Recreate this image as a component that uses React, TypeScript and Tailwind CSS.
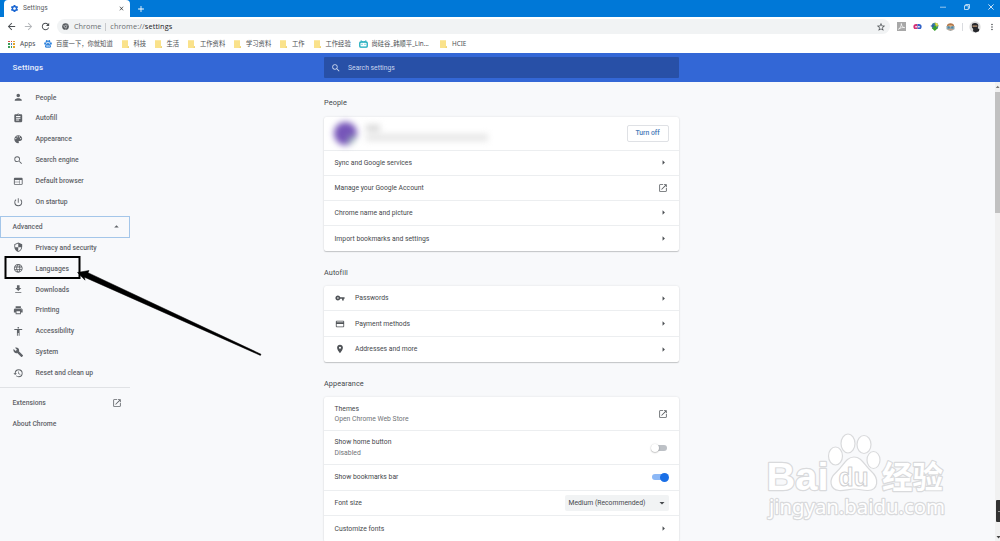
import React from "react";
import type { IconType } from "react-icons";
import {
  MdPerson, MdAssignment, MdSearch, MdWeb, MdPowerSettingsNew, MdSecurity,
  MdLanguage, MdFileDownload, MdPrint, MdAccessibility, MdBuild, MdRestore, MdVpnKey,
  MdCreditCard, MdLocationOn, MdSettings, MdArrowBack, MdArrowForward, MdRefresh,
  MdStarBorder, MdMoreVert, MdOpenInNew, MdArrowRight, MdArrowDropUp, MdArrowDropDown,
  MdClose, MdAdd,
} from "react-icons/md";

function Palette({ className }: { className?: string }) {
  return (
    <svg viewBox="0 0 24 24" className={className} fill="currentColor">
      <path d="M12 3c-4.970 0-9 4.030-9 9s4.030 9 9 9c.83 0 1.500-.67 1.500-1.500 0-.39-.15-.74-.39-1.010-.23-.26-.38-.61-.38-.99 0-.83.67-1.500 1.500-1.500H16c2.760 0 5-2.240 5-5 0-4.420-4.030-8-9-8zm-5.500 9c-.83 0-1.500-.67-1.500-1.500S5.670 9 6.500 9 8 9.670 8 10.500 7.330 12 6.500 12zm3-4C8.670 8 8 7.330 8 6.500S8.670 5 9.500 5s1.500.67 1.500 1.500S10.330 8 9.500 8zm5 0c-.83 0-1.500-.67-1.500-1.500S13.670 5 14.500 5s1.500.67 1.500 1.500S15.330 8 14.500 8zm3 4c-.83 0-1.500-.67-1.500-1.500S16.670 9 17.500 9s1.500.67 1.500 1.500-.67 1.500-1.500 1.500z" />
    </svg>
  );
}

type IconComponent = IconType | typeof Palette;

const basicItems: [IconComponent, string][] = [
  [MdPerson, "People"],
  [MdAssignment, "Autofill"],
  [Palette, "Appearance"],
  [MdSearch, "Search engine"],
  [MdWeb, "Default browser"],
  [MdPowerSettingsNew, "On startup"],
];

const advancedItems: [IconComponent, string][] = [
  [MdSecurity, "Privacy and security"],
  [MdLanguage, "Languages"],
  [MdFileDownload, "Downloads"],
  [MdPrint, "Printing"],
  [MdAccessibility, "Accessibility"],
  [MdBuild, "System"],
  [MdRestore, "Reset and clean up"],
];

function Folder({ label, className }: { label: string; className: string }) {
  return (
    <div className={`flex shrink-0 items-center ${className}`}>
      <svg viewBox="0 0 7 8" className="mr-[5px] h-[8px] w-[7px] shrink-0">
        <path d="M0 .3h6v5.900h1V8H0z" fill="#fae28b" />
        <path d="M6 6.200h1V8H5.400z" fill="#efd377" />
      </svg>
      <span className="whitespace-nowrap">{label}</span>
    </div>
  );
}

function TabStrip() {
  return (
    <div className="flex h-[17px] shrink-0 bg-[#0078d7]">
      <div className="ml-[4px] flex h-full w-[126px] items-center rounded-t-[4px] bg-white pl-[6px] pr-[5px]">
        <MdSettings className="size-[9px] text-[#1a66d2]" />
        <span className="ml-[4px] pt-px text-[6.6px] tracking-[0.1px] text-[#55595d]">Settings</span>
        <MdClose className="ml-auto size-[7px] text-[#3c4043]" />
      </div>
      <MdAdd className="ml-[6px] mt-[3.5px] size-[10px] text-white" />
      <div className="ml-auto flex h-[14px] items-center gap-[18px] pr-[6px] text-white">
        <svg viewBox="0 0 6 6" className="size-[6px]" stroke="currentColor" strokeWidth=".6"><path d="M0 3.200h6" /></svg>
        <svg viewBox="0 0 6 6" className="size-[6px]" stroke="currentColor" strokeWidth=".7" fill="none"><path d="M.5 1.700h3.800v3.800H.5zM1.700 1.500V.5h3.800v3.800h-1" /></svg>
        <svg viewBox="0 0 6 6" className="size-[6px]" stroke="currentColor" strokeWidth=".8"><path d="m.4.4 5.200 5.200m0-5.200L.4 5.600" /></svg>
      </div>
    </div>
  );
}

function Toolbar() {
  return (
    <div className="flex h-[18px] shrink-0 items-center bg-white pt-[1px] text-[#4b4f53]">
      <MdArrowBack className="ml-[6px] size-[11px]" />
      <MdArrowForward className="ml-[6px] size-[11px] text-[#b3b6b9]" />
      <MdRefresh className="ml-[5.5px] size-[11px]" />
      <div className="ml-[6px] flex h-[15px] w-[833px] items-center rounded-full bg-[#f1f3f4] pl-[5.5px] pr-[4px]">
        <svg viewBox="0 0 24 24" className="size-[7px]">
          <circle cx="12" cy="12" r="11.500" fill="#55595d" />
          <circle cx="12" cy="12" r="4" fill="#55595d" stroke="#e8eaed" strokeWidth="2" />
          <path d="M12 7h11M8 15 3 5.500M16 14l-5 9.500" stroke="#c8cacd" strokeWidth="1.500" />
        </svg>
        <span className="ml-[5px] font-['Open_Sans'] text-[7.3px] text-[#686c70]">Chrome</span>
        <span className="ml-[4px] h-[8px] w-px bg-[#c7c9cc]" />
        <span className="ml-[4px] font-['Open_Sans'] text-[7.3px] tracking-[0.12px] text-[#686c70]">
          chrome://<span className="text-[#202124]">settings</span>
        </span>
        <MdStarBorder className="ml-auto size-[10px]" />
      </div>
      <svg viewBox="0 0 9 9" className="ml-[7px] size-[9px]">
        <path fill="#a8a8a8" d="M0 0h9v9H0z" />
        <path d="M1.500 7.200C3 6.500 4.500 4 4.300 1.500c.2 2.600 1.500 4 3.400 4.100C5.500 5.300 3.500 5.800 1.500 7.200z" stroke="#fff" strokeWidth=".7" fill="none" />
      </svg>
      <svg viewBox="0 0 9 6" className="ml-[7.500px] h-[5.500px] w-[9px]">
        <path d="M4.500 0H3a3 3 0 0 0 0 6h1.500z" fill="#d72f75" />
        <path d="M4.500 0H6a3 3 0 0 1 0 6H4.500z" fill="#3264c8" />
        <path d="M2 3h2.200M5 3h2" stroke="#f0d8e8" strokeWidth="1.500" />
      </svg>
      <svg viewBox="0 0 9 9" className="ml-[8px] size-[9px]">
        <circle cx="5" cy="4" r="3.300" fill="#3f7f9c" />
        <path d="M4.500 .7a3.500 3.500 0 0 1 4 3.300L6 5z" fill="#a7c23c" />
        <path d="M.2 4 3.800 2.400l.4 3.100z" fill="#2e5fa8" />
        <path d="M3.500 4h2.600v2H8L4.800 8.900 1.700 6h1.800z" fill="#35a029" />
        <path d="M5.500 1.500 7 1l1 2-1.500.6z" fill="#f0dc55" />
      </svg>
      <svg viewBox="0 0 9 8" className="ml-[7px] h-[8px] w-[9px]">
        <path d="M.8 3.500C.8 1.500 2.500.3 4.500.3s3.700 1.200 3.700 3.200z" fill="#b27749" />
        <path d="M.5 3h8v3.300L4.500 7.900.5 6.300z" fill="#8da5ac" />
        <path d="M2.500 2.300h4v1.300h-4z" fill="#e8ba8b" />
        <path d="M2 6.200h5v1H2z" fill="#d0a182" />
        <circle cx="2.800" cy="4.400" r="1.100" fill="#4d87a9" /><circle cx="6.200" cy="4.400" r="1.100" fill="#4d87a9" />
      </svg>
      <span className="ml-[7px] h-[8px] w-px bg-[#dadce0]" />
      <svg viewBox="0 0 12 12" className="ml-[6px] size-[12px]">
        <circle cx="6" cy="6" r="5.700" fill="#dcdcdc" />
        <path d="M2.800 4.500C2.800 2.800 4 2 6 2s3.300.8 3.300 2.700l-.5 2.500 1.500 1-.4 2-3.200 1.200-2.700-1.100L4.200 8 3 6.500z" fill="#25262a" />
        <path d="M3.500 4.500h4.800v1.200H3.500z" fill="#c69c77" />
      </svg>
      <MdMoreVert className="ml-[6px] size-[10px]" />
    </div>
  );
}

function Bookmarks() {
  const colors = ["#d84a3d", "#d84a3d", "#e3a52c", "#3a9d58", "#4a7fd8", "#e3a52c", "#3a9d58", "#3a9d58", "#e3a52c"];
  return (
    <div className="flex h-[18px] shrink-0 items-center overflow-hidden bg-white font-['Noto_Sans','Noto_Sans_CJK_SC',sans-serif] text-[6.3px] text-[#4a4e52]">
      <div className="ml-[8px] grid size-[7px] shrink-0 grid-cols-3 gap-px">
        {colors.map((c, i) => <span key={i} style={{ background: c }} />)}
      </div>
      <span className="ml-[5px] w-[16px] text-[6.5px]">Apps</span>
      <svg viewBox="0 0 24 24" className="ml-[8px] size-[8px] shrink-0" fill="#2e82dc">
        <ellipse cx="3.500" cy="10.500" rx="3" ry="3.800" /><ellipse cx="8.500" cy="4" rx="3" ry="4" />
        <ellipse cx="15.500" cy="4" rx="3" ry="4" /><ellipse cx="20.500" cy="10.500" rx="3" ry="3.800" />
        <path d="M12 9c4 0 5 4 8 7 3 4 0 8-4 7.500-3-.5-5-.5-8 0C4 24 1 20 4 16c3-3 4-7 8-7z" />
        <path d="M8 16h3v4H8zm6-1v5h3v-4" fill="none" stroke="#fff" strokeWidth="1.400" />
      </svg>
      <span className="ml-[4px] w-[58px] shrink-0 whitespace-nowrap">百度一下，你就知道</span>
      <Folder label="科技" className="ml-[7.5px] w-[33px]" />
      <Folder label="生活" className="w-[33.5px]" />
      <Folder label="工作资料" className="w-[46px]" />
      <Folder label="学习资料" className="w-[46px]" />
      <Folder label="工作" className="w-[33.5px]" />
      <Folder label="工作经验" className="w-[45px]" />
      <svg viewBox="0 0 9 8" className="h-[8px] w-[9px] shrink-0" fill="none" stroke="#14a9bb" strokeWidth="1.300">
        <rect x=".8" y="2" width="7.400" height="5.200" rx="1" />
        <path d="m2 .3 1.300 1.500M7 .3 5.700 1.800M3 3.800v1M6 3.800v1" strokeWidth="1" />
      </svg>
      <span className="ml-[4px] w-[58px] shrink-0 whitespace-nowrap">尚硅谷_韩顺平_Lin...</span>
      <Folder label="HCIE" className="ml-[10.5px]" />
    </div>
  );
}

function SideItem({ icon: Icon, label }: { icon: IconComponent; label: string }) {
  return (
    <div className="flex h-[20.9px] items-center pl-[12.5px]">
      <Icon className="size-[10.5px]" />
      <span className="ml-[12.5px] pt-[0.5px]">{label}</span>
    </div>
  );
}

function Sidebar() {
  return (
    <nav className="w-[324px] shrink-0 pt-[5px] text-[6.8px] font-medium text-[#5f6368]">
      {basicItems.map(([icon, label]) => <SideItem key={label} icon={icon} label={label} />)}
      <div className="mt-[3.5px] flex h-[22px] w-[130px] items-center border border-[#a4c6e9] pl-[11.5px] pr-[7px]">
        Advanced
        <MdArrowDropUp className="ml-auto size-[11px]" />
      </div>
      <div className="-mt-[0.7px]">
        {advancedItems.map(([icon, label]) => <SideItem key={label} icon={icon} label={label} />)}
      </div>
      <div className="mt-[4px] w-[130px] border-t border-[#e0e2e5] pt-[4.5px]">
        <div className="flex h-[20.9px] items-center pl-[12.5px] pr-[8px]">
          Extensions
          <MdOpenInNew className="ml-auto size-[10px]" />
        </div>
        <div className="flex h-[20.9px] items-center pl-[12.5px]">About Chrome</div>
      </div>
    </nav>
  );
}

function Chevron() {
  return <MdArrowRight className="ml-auto mr-[-0.5px] size-[11px] text-[#4b4f53]" />;
}

function OpenIcon() {
  return <MdOpenInNew className="ml-auto mr-[0.5px] size-[10px] text-[#5a5e62]" />;
}

function Row({ label, sub, icon: Icon, className = "h-[25.2px]", children }: {
  label: string; sub?: string; icon?: IconType; className?: string; children?: React.ReactNode;
}) {
  return (
    <div className={`flex shrink-0 items-center border-b border-[#eceef0] px-[10.5px] last:border-b-0 ${className}`}>
      {Icon && <Icon className="mr-[10.5px] size-[10px] text-[#4f5357]" />}
      <div className="pt-[0.8px] leading-[10.5px]">
        <div>{label}</div>
        {sub && <div className="text-[#6f7377]">{sub}</div>}
      </div>
      {children ?? <Chevron />}
    </div>
  );
}

const cardClass = "flex flex-col rounded-[2px] bg-white shadow-[0_1px_1px_rgba(60,64,67,0.25),0_0_2px_rgba(60,64,67,0.15)]";
const titleClass = "text-[7.3px] leading-[10px] tracking-[0.1px] text-[#45494d]";

function Content() {
  return (
    <main className="w-[355px] shrink-0 text-[6.8px] text-[#45484c]">
      <h2 className={`mt-[16px] ${titleClass}`}>People</h2>
      <section className={`mt-[8.5px] ${cardClass}`}>
        <div className="flex h-[34px] items-center border-b border-[#eceef0] pl-[10px] pr-[10.5px]">
          <div className="size-[23px] rounded-full bg-[radial-gradient(circle_at_82%_82%,#a8d5b5_0%,#7655b9_28%,#7655b9_100%)] blur-[3px]" />
          <div className="ml-[9px] flex flex-col gap-[3px] blur-[3px]">
            <span className="h-[6px] w-[14px] bg-[#d5d5d5]" />
            <span className="h-[7px] w-[122px] bg-[#e6e6e6]" />
          </div>
          <button className="ml-auto h-[17px] w-[42px] rounded-[2px] border border-[#dfe1e5] pt-[0.5px] font-medium text-[#4a7bb8]">Turn off</button>
        </div>
        <Row label="Sync and Google services" />
        <Row label="Manage your Google Account"><OpenIcon /></Row>
        <Row label="Chrome name and picture" />
        <Row label="Import bookmarks and settings" />
      </section>
      <h2 className={`mt-[16.5px] ${titleClass}`}>Autofill</h2>
      <section className={`mt-[8.5px] ${cardClass}`}>
        <Row label="Passwords" icon={MdVpnKey} />
        <Row label="Payment methods" icon={MdCreditCard} />
        <Row label="Addresses and more" icon={MdLocationOn} />
      </section>
      <h2 className={`mt-[17px] ${titleClass}`}>Appearance</h2>
      <section className={`mt-[8.5px] ${cardClass}`}>
        <Row label="Themes" sub="Open Chrome Web Store" className="h-[33.7px]"><OpenIcon /></Row>
        <Row label="Show home button" sub="Disabled" className="h-[34px]">
          <span className="ml-auto mr-[2px] flex h-[6px] w-[14px] items-center rounded-full bg-[#bdc1c6]">
            <span className="-ml-[2px] size-[8px] shrink-0 rounded-full bg-white shadow-[0_0.5px_1.5px_rgba(0,0,0,0.4)]" />
          </span>
        </Row>
        <Row label="Show bookmarks bar" className="h-[25.5px]">
          <span className="ml-auto mr-[1.5px] flex h-[6px] w-[15px] items-center justify-end rounded-full bg-[#8cb8f6]">
            <span className="-mr-[1.5px] size-[8.5px] shrink-0 rounded-full bg-[#1a6fe6]" />
          </span>
        </Row>
        <Row label="Font size" className="h-[25.5px]">
          <div className="ml-auto flex h-[16px] w-[104px] items-center rounded-[2px] bg-[#f1f3f4] pl-[4px] pr-[1px]">
            <span>Medium (Recommended)</span>
            <MdArrowDropDown className="ml-auto size-[12px]" />
          </div>
        </Row>
        <Row label="Customize fonts" className="h-[25.5px]" />
      </section>
    </main>
  );
}

function Annotation() {
  return (
    <svg viewBox="0 0 270 110" className="pointer-events-none absolute left-0 top-[250px] h-[110px] w-[270px]">
      <rect x="5.500" y="7" width="74" height="21" fill="none" stroke="#000" strokeWidth="2" />
      <path d="m77.500 22.500 11.500-2-1 2.200L261 104.200l-.6 1.200L84.500 27.200l.5 3z" fill="#000" stroke="#000" strokeWidth=".5" />
    </svg>
  );
}

function Watermark() {
  return (
    <svg viewBox="0 0 190 96" className="pointer-events-none absolute left-[762px] top-[428px] h-[96px] w-[190px]" stroke="#d9dadc" strokeWidth="1.200" fill="#fff" strokeLinejoin="round">
      <g paintOrder="stroke" strokeWidth="2.400">
        <text x="4.500" y="61.500" fontFamily="Liberation Sans" fontWeight="700" fontSize="39" textLength="62" lengthAdjust="spacingAndGlyphs">Bai</text>
        <text x="120" y="60" fontFamily="Noto Sans CJK SC" fontWeight="700" fontSize="31" textLength="61" lengthAdjust="spacingAndGlyphs">经验</text>
        <text x="7" y="85.500" fontFamily="Noto Sans" fontSize="20" textLength="176" lengthAdjust="spacingAndGlyphs">jingyan.baidu.com</text>
      </g>
      <ellipse cx="73.500" cy="28" rx="7" ry="9" />
      <ellipse cx="86" cy="15.500" rx="7" ry="9.500" />
      <ellipse cx="102" cy="16.500" rx="7" ry="9" />
      <ellipse cx="111.500" cy="32" rx="6.500" ry="8.500" />
      <path d="M92 29c8 0 10 8 17 14 9 8 7 19-3 19.500-5 .3-9-1.500-14-1.500s-10 2-15 1.500c-9-.8-11-11-3-18 7-6 10-15.500 18-15.500z" />
      <text x="76.500" y="57.500" fontFamily="Liberation Sans" fontWeight="700" fontSize="25" stroke="#cfd0d2" strokeWidth="1" textLength="30" lengthAdjust="spacingAndGlyphs">du</text>
    </svg>
  );
}

function Scrollbar() {
  return (
    <div className="ml-auto flex w-[5px] flex-col bg-[#f1f1f1]">
      <svg viewBox="0 0 5 10" className="h-[10px] w-[5px]"><path d="M.8 6 2.700 3.800 4.600 6z" fill="#777" /></svg>
      <div className="h-[121px] w-full bg-[#c1c1c1]" />
      <div className="ml-[0.5px] mt-[287px] flex h-[22px] items-center rounded-l-[1px] bg-[#333] pl-[2px]">
        <span className="h-px w-[2.5px] bg-[#999]" />
      </div>
      <svg viewBox="0 0 5 8" className="mb-[-1px] mt-auto h-[8px] w-[5px]"><path d="M1.500 2h4L3.500 4.500z" fill="#444" /></svg>
    </div>
  );
}

export default function App() {
  return (
    <div className="relative flex h-[541px] w-[1000px] flex-col overflow-hidden bg-[#f8f9fb] font-['Roboto',sans-serif]">
      <TabStrip />
      <Toolbar />
      <Bookmarks />
      <header className="flex h-[29px] shrink-0 items-center bg-[#3367d6] pl-[12.5px]">
        <h1 className="w-[311.5px] pt-[0.8px] text-[8px] font-medium tracking-[0.15px] text-[#e9effb]">Settings</h1>
        <div className="flex h-[21px] w-[355px] items-center rounded-[1px] bg-[#2850a7] pl-[6.5px] text-[6.8px] text-[#cbd6ee]">
          <MdSearch className="size-[10px]" />
          <span className="ml-[7.5px] pt-[1px]">Search settings</span>
        </div>
      </header>
      <div className="flex min-h-0 flex-1">
        <Sidebar />
        <Content />
        <Scrollbar />
      </div>
      <Annotation />
      <Watermark />
    </div>
  );
}
